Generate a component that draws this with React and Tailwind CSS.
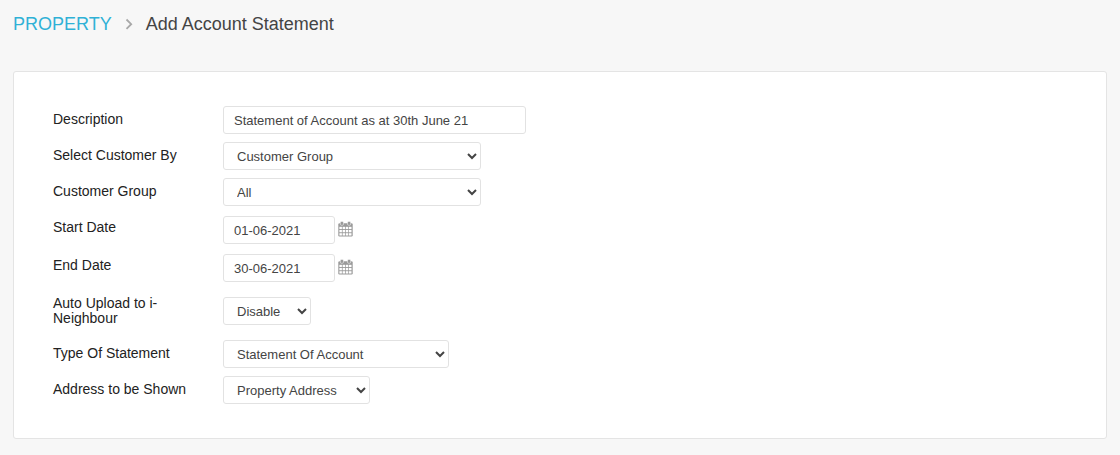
import { useId } from "react";

const controlBase =
  "h-7 rounded-[3px] border border-[#e2e2e2] bg-white pt-px text-[13px] text-[#444444]";

function Chevron() {
  return (
    <svg className="mx-[13px] h-3 w-2" viewBox="0 0 8 12" fill="none" stroke="#a8a8a8" strokeWidth="1.8" aria-hidden="true">
      <path d="M1.5 1.5 L6.2 6.2 L1.5 10.9" />
    </svg>
  );
}

function CalendarIcon() {
  return (
    <svg className="h-4 w-[15px]" viewBox="0 0 15 16" aria-hidden="true">
      <rect x="0.3" y="2.2" width="14.4" height="13.3" rx="1.2" fill="#9a9a9a" />
      <rect x="2.3" y="0.5" width="3.2" height="3.8" rx="1.2" fill="#9a9a9a" stroke="#ffffff" strokeWidth="0.5" />
      <rect x="9.5" y="0.5" width="3.2" height="3.8" rx="1.2" fill="#9a9a9a" stroke="#ffffff" strokeWidth="0.5" />
      {[5.8, 9, 12.2].map((y) =>
        [1.4, 4.6, 7.8, 11].map((x) => (
          <rect key={`${x}-${y}`} x={x} y={y} width="2.5" height="2.3" fill="#ffffff" />
        ))
      )}
    </svg>
  );
}

function Row({ id, label, children }) {
  return (
    <div className="flex min-h-9 items-start">
      <label htmlFor={id} className="w-[170px] shrink-0 py-2.5 pr-7 text-[14px] leading-[15px] text-[#222222]">
        {label}
      </label>
      <div className="min-w-0 self-center">{children}</div>
    </div>
  );
}

function TextRow({ label, value }) {
  const id = useId();
  return (
    <Row id={id} label={label}>
      <input id={id} type="text" defaultValue={value} className={`${controlBase} block w-[303px] max-w-full px-2.5`} />
    </Row>
  );
}

function SelectRow({ label, value, width }) {
  const id = useId();
  return (
    <Row id={id} label={label}>
      <select id={id} defaultValue={value} className={`${controlBase} block max-w-full pr-1 pl-[9px] ${width}`}>
        <option>{value}</option>
      </select>
    </Row>
  );
}

function DateRow({ label, value }) {
  const id = useId();
  return (
    <Row id={id} label={label}>
      <div className="flex items-center gap-[3px] pt-1.5 pb-1">
        <input id={id} type="text" defaultValue={value} className={`${controlBase} w-28 px-2.5`} />
        <button type="button" aria-label={`Choose ${label}`} className="pb-0.5">
          <CalendarIcon />
        </button>
      </div>
    </Row>
  );
}

export default function App() {
  return (
    <div className="min-h-screen bg-[#f7f7f7] px-[13px] pt-3 pb-4 font-['Liberation_Sans',Arial,sans-serif]">
      <nav aria-label="Breadcrumb" className="flex h-6 items-center text-[18px]">
        <a href="#property" className="text-[#2fb1d6]">PROPERTY</a>
        <Chevron />
        <h1 className="text-[#444444]">Add Account Statement</h1>
      </nav>
      <main className="mt-[35px] rounded-[3px] border border-[#e4e4e4] bg-white px-[39px] py-[30px]">
        <form>
          <TextRow label="Description" value="Statement of Account as at 30th June 21" />
          <SelectRow label="Select Customer By" value="Customer Group" width="w-[258px]" />
          <SelectRow label="Customer Group" value="All" width="w-[258px]" />
          <DateRow label="Start Date" value="01-06-2021" />
          <DateRow label="End Date" value="30-06-2021" />
          <SelectRow label="Auto Upload to i-Neighbour" value="Disable" width="w-[88px]" />
          <SelectRow label="Type Of Statement" value="Statement Of Account" width="w-[226px]" />
          <SelectRow label="Address to be Shown" value="Property Address" width="w-[147px]" />
        </form>
      </main>
    </div>
  );
}
